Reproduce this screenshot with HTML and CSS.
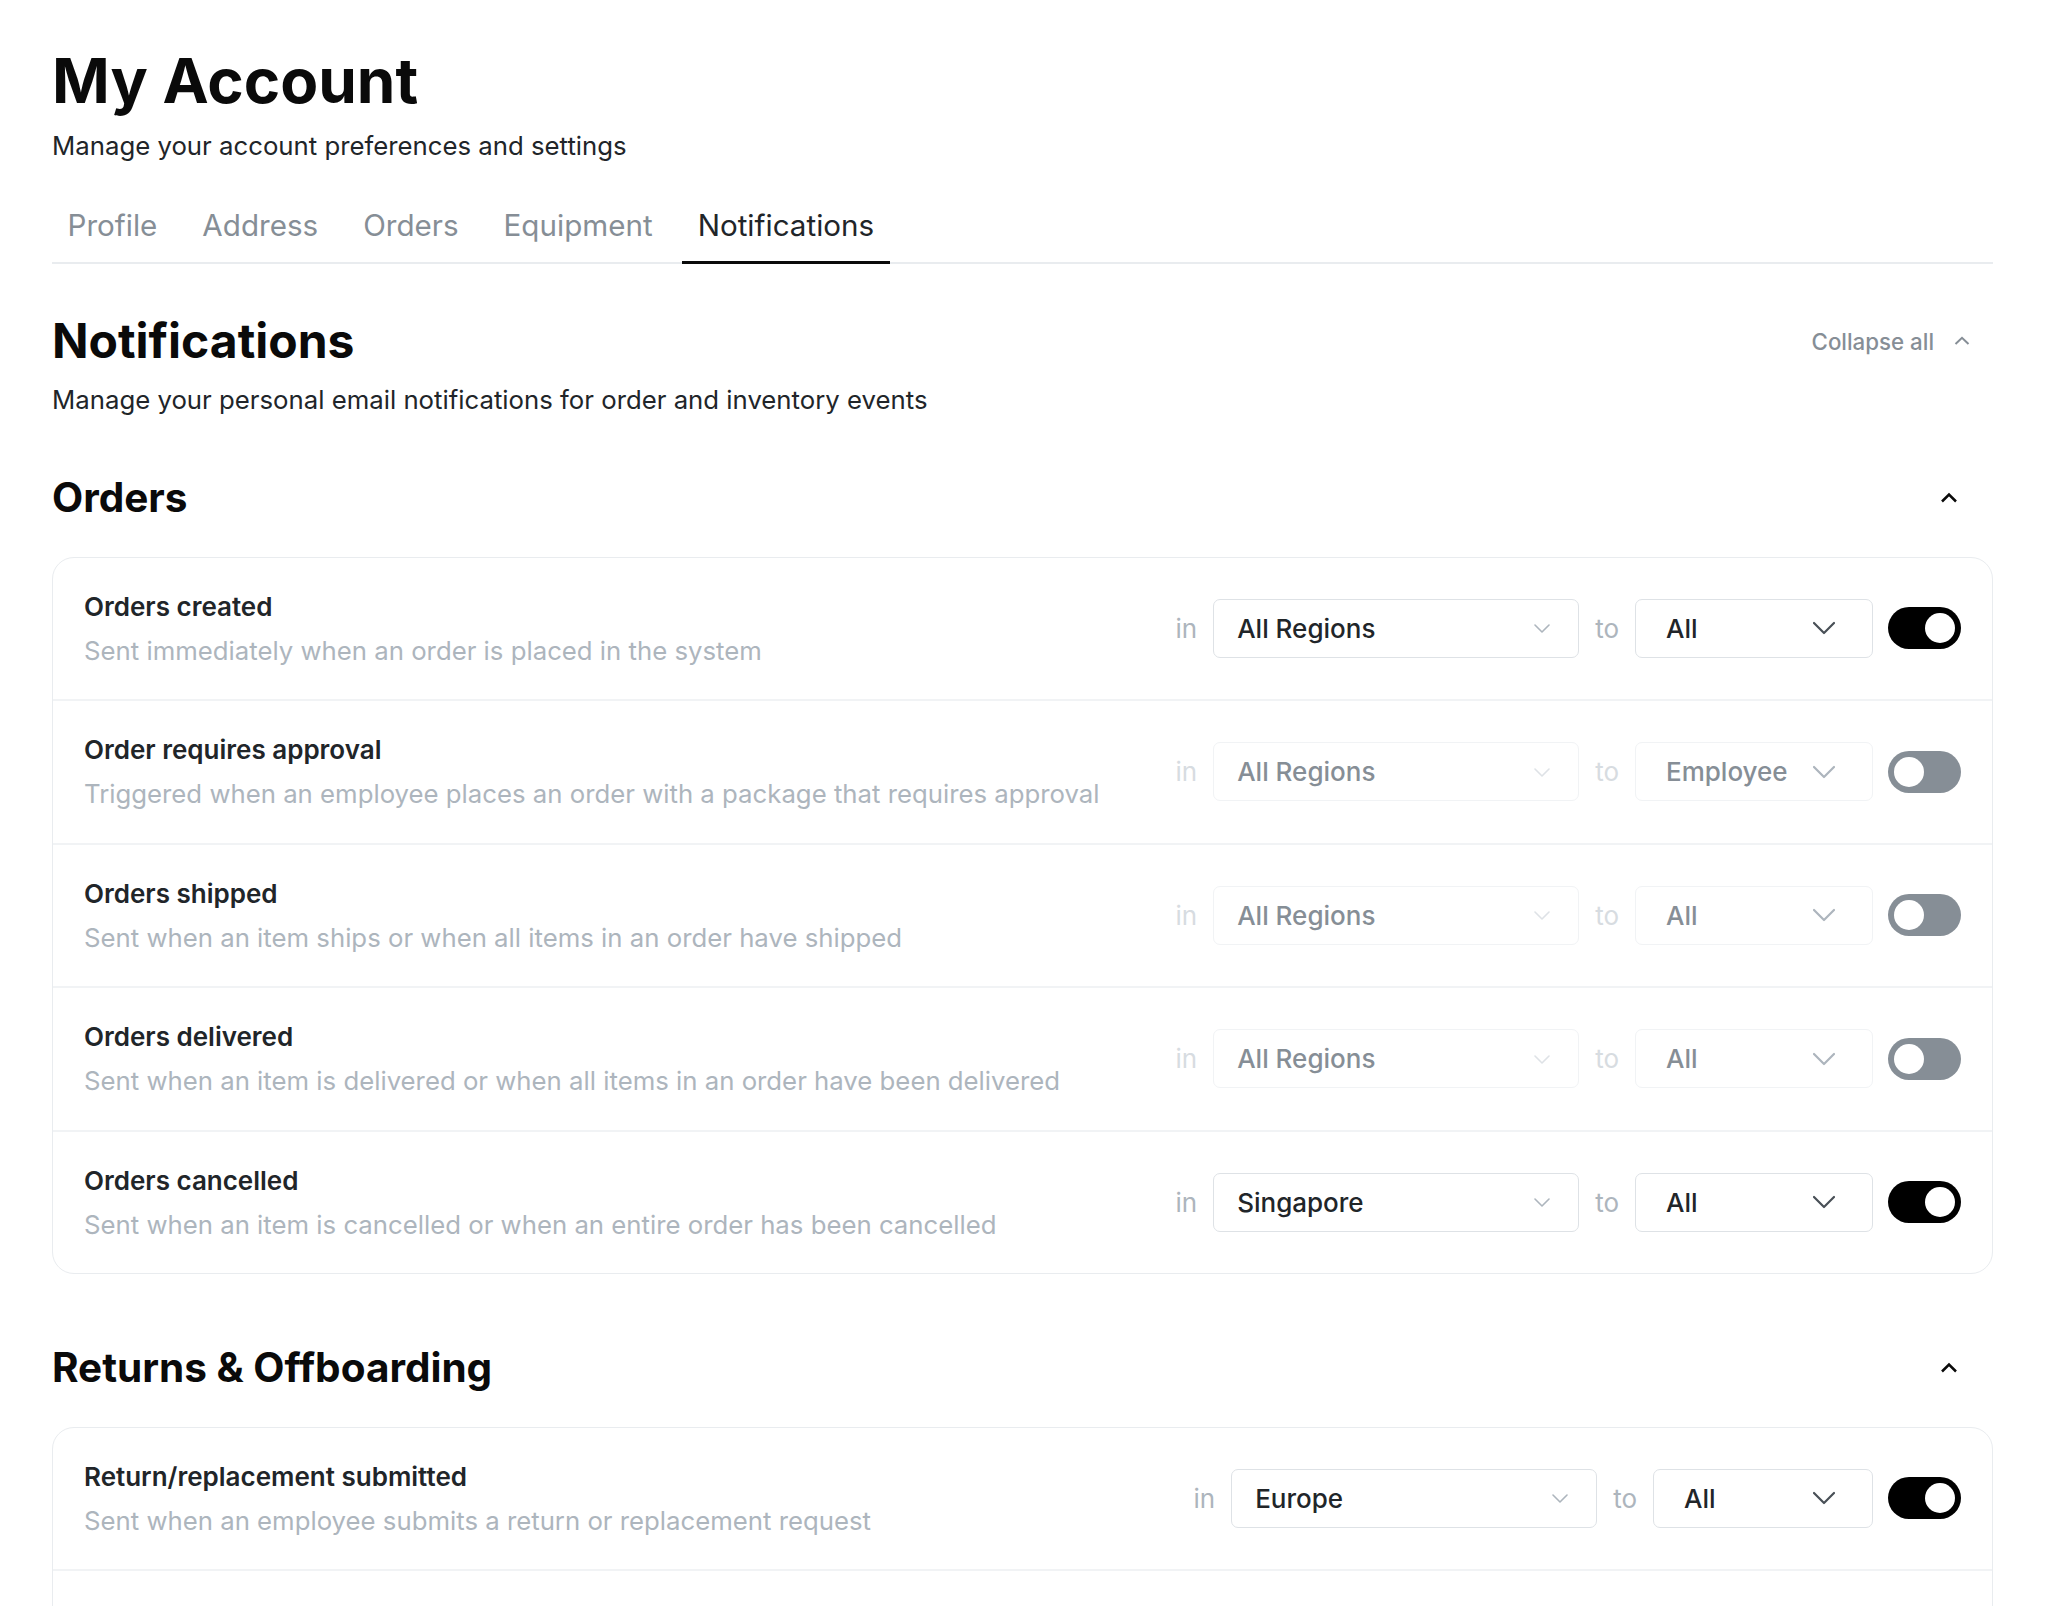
FILE: index.html
```html
<!DOCTYPE html>
<html lang="en">

<head>
	<meta charset="UTF-8">
	<meta name="viewport" content="width=device-width, initial-scale=1.0">
	<title>My Account - Notifications</title>
	<link rel="stylesheet" href="styles.css">
</head>

<body>

	<main class="page">
		<header class="page-header">
			<h1>My Account</h1>
			<p class="lead">Manage your account preferences and settings</p>
		</header>

		<nav class="tabs">
			<a class="tab" href="#">Profile</a>
			<a class="tab" href="#">Address</a>
			<a class="tab" href="#">Orders</a>
			<a class="tab" href="#">Equipment</a>
			<a class="tab active" href="#">Notifications</a>
		</nav>

		<section class="panel">
			<div class="panel-head">
				<h2>Notifications</h2>
				<button class="collapse-all">
					Collapse all
					<svg width="16" height="16" viewBox="0 0 16 16"><path d="M1.5 11 L8 4.8 L14.5 11" /></svg>
				</button>
			</div>
			<p class="lead">Manage your personal email notifications for order and inventory events</p>

			<!-- Orders -->
			<div class="group">
				<div class="group-head">
					<h3>Orders</h3>
					<button class="group-toggle">
						<svg width="18" height="18" viewBox="0 0 18 18"><path d="M2 12.5 L9 5.5 L16 12.5" /></svg>
					</button>
				</div>

				<div class="card">
					<div class="row">
						<div class="row-text">
							<div class="row-title">Orders created</div>
							<div class="row-desc">Sent immediately when an order is placed in the system</div>
						</div>
						<div class="row-controls">
							<span class="label">in</span>
							<div class="select select-region"><span>All Regions</span>
								<svg width="16" height="16" viewBox="0 0 16 16"><path d="M1 5 L8 12 L15 5" /></svg>
							</div>
							<span class="label">to</span>
							<div class="select select-audience"><span>All</span>
								<svg width="22" height="22" viewBox="0 0 22 22"><path d="M1 6 L11 16 L21 6" /></svg>
							</div>
							<div class="toggle on"></div>
						</div>
					</div>

					<div class="row off">
						<div class="row-text">
							<div class="row-title">Order requires approval</div>
							<div class="row-desc">Triggered when an employee places an order with a package that requires approval</div>
						</div>
						<div class="row-controls">
							<span class="label">in</span>
							<div class="select select-region"><span>All Regions</span>
								<svg width="16" height="16" viewBox="0 0 16 16"><path d="M1 5 L8 12 L15 5" /></svg>
							</div>
							<span class="label">to</span>
							<div class="select select-audience"><span>Employee</span>
								<svg width="22" height="22" viewBox="0 0 22 22"><path d="M1 6 L11 16 L21 6" /></svg>
							</div>
							<div class="toggle"></div>
						</div>
					</div>

					<div class="row off">
						<div class="row-text">
							<div class="row-title">Orders shipped</div>
							<div class="row-desc">Sent when an item ships or when all items in an order have shipped</div>
						</div>
						<div class="row-controls">
							<span class="label">in</span>
							<div class="select select-region"><span>All Regions</span>
								<svg width="16" height="16" viewBox="0 0 16 16"><path d="M1 5 L8 12 L15 5" /></svg>
							</div>
							<span class="label">to</span>
							<div class="select select-audience"><span>All</span>
								<svg width="22" height="22" viewBox="0 0 22 22"><path d="M1 6 L11 16 L21 6" /></svg>
							</div>
							<div class="toggle"></div>
						</div>
					</div>

					<div class="row off">
						<div class="row-text">
							<div class="row-title">Orders delivered</div>
							<div class="row-desc">Sent when an item is delivered or when all items in an order have been delivered</div>
						</div>
						<div class="row-controls">
							<span class="label">in</span>
							<div class="select select-region"><span>All Regions</span>
								<svg width="16" height="16" viewBox="0 0 16 16"><path d="M1 5 L8 12 L15 5" /></svg>
							</div>
							<span class="label">to</span>
							<div class="select select-audience"><span>All</span>
								<svg width="22" height="22" viewBox="0 0 22 22"><path d="M1 6 L11 16 L21 6" /></svg>
							</div>
							<div class="toggle"></div>
						</div>
					</div>

					<div class="row">
						<div class="row-text">
							<div class="row-title">Orders cancelled</div>
							<div class="row-desc">Sent when an item is cancelled or when an entire order has been cancelled</div>
						</div>
						<div class="row-controls">
							<span class="label">in</span>
							<div class="select select-region"><span>Singapore</span>
								<svg width="16" height="16" viewBox="0 0 16 16"><path d="M1 5 L8 12 L15 5" /></svg>
							</div>
							<span class="label">to</span>
							<div class="select select-audience"><span>All</span>
								<svg width="22" height="22" viewBox="0 0 22 22"><path d="M1 6 L11 16 L21 6" /></svg>
							</div>
							<div class="toggle on"></div>
						</div>
					</div>
				</div>
			</div>

			<!-- Returns & Offboarding -->
			<div class="group">
				<div class="group-head">
					<h3>Returns &amp; Offboarding</h3>
					<button class="group-toggle">
						<svg width="18" height="18" viewBox="0 0 18 18"><path d="M2 12.5 L9 5.5 L16 12.5" /></svg>
					</button>
				</div>

				<div class="card card-returns">
					<div class="row">
						<div class="row-text">
							<div class="row-title">Return/replacement submitted</div>
							<div class="row-desc">Sent when an employee submits a return or replacement request</div>
						</div>
						<div class="row-controls">
							<span class="label">in</span>
							<div class="select select-region"><span>Europe</span>
								<svg width="16" height="16" viewBox="0 0 16 16"><path d="M1 5 L8 12 L15 5" /></svg>
							</div>
							<span class="label">to</span>
							<div class="select select-audience"><span>All</span>
								<svg width="22" height="22" viewBox="0 0 22 22"><path d="M1 6 L11 16 L21 6" /></svg>
							</div>
							<div class="toggle on"></div>
						</div>
					</div>

					<div class="row">
						<div class="row-text">
							<div class="row-title">Offboarding started</div>
							<div class="row-desc">Sent when an employee is scheduled for offboarding</div>
						</div>
						<div class="row-controls">
							<span class="label">in</span>
							<div class="select select-region"><span>All Regions</span>
								<svg width="16" height="16" viewBox="0 0 16 16"><path d="M1 5 L8 12 L15 5" /></svg>
							</div>
							<span class="label">to</span>
							<div class="select select-audience"><span>Manager</span>
								<svg width="22" height="22" viewBox="0 0 22 22"><path d="M1 6 L11 16 L21 6" /></svg>
							</div>
							<div class="toggle on"></div>
						</div>
					</div>
				</div>
			</div>
		</section>
	</main>

</body>

</html>
```

FILE: styles.css
```css
* {
	box-sizing: border-box;
}

body {
	margin: 0;
	font-family: Inter, 'Noto Sans', sans-serif;
	background: #fff;
	color: #212529;
}

.page {
	padding: 45px 53px 80px 52px;
}

h1 {
	margin: 0;
	font-size: 62px;
	line-height: 72px;
	font-weight: 700;
	color: #0a0a0a;
}

.lead {
	margin: 9px 0 0;
	font-size: 25.75px;
	line-height: 39px;
	color: #212529;
}

/* Tabs */
.tabs {
	display: flex;
	gap: 14px;
	margin-top: 28px;
	border-bottom: 2px solid #e9ecef;
}

.tab {
	padding: 14px 15.5px 18px;
	margin-bottom: -2px;
	font-size: 29.6px;
	line-height: 36px;
	color: #868e96;
	text-decoration: none;
	border-bottom: 3px solid transparent;
}

.tab.active {
	color: #212529;
	border-bottom-color: #0a0a0a;
}

/* Notifications panel */
.panel {
	margin-top: 48px;
}

.panel-head {
	display: flex;
	align-items: center;
	justify-content: space-between;
}

h2 {
	margin: 0;
	font-size: 48px;
	line-height: 58px;
	font-weight: 700;
	color: #0a0a0a;
}

.panel .lead {
	margin-top: 10px;
}

button {
	font-family: inherit;
	background: none;
	border: none;
	padding: 0;
	cursor: pointer;
}

.collapse-all {
	display: flex;
	align-items: center;
	gap: 20px;
	margin-right: 23px;
	font-size: 22.3px;
	font-weight: 500;
	color: #868e96;
}

.collapse-all svg path {
	fill: none;
	stroke: #868e96;
	stroke-width: 2;
}

/* Groups */
.group {
	margin-top: 70px;
}

.panel .lead + .group {
	margin-top: 55px;
}

.group-head {
	display: flex;
	align-items: center;
	justify-content: space-between;
}

h3 {
	margin: 0;
	font-size: 40.5px;
	line-height: 47px;
	font-weight: 700;
	color: #0a0a0a;
}

.group-toggle {
	display: flex;
	padding: 7px;
	margin-right: 28px;
}

.group-toggle svg path {
	fill: none;
	stroke: #0a0a0a;
	stroke-width: 2.5;
}

.card {
	margin-top: 35.5px;
	border: 1.5px solid #e9ecef;
	border-radius: 22px;
	background: #fff;
}

.row {
	display: flex;
	align-items: center;
	justify-content: space-between;
	padding: 29.25px 31px;
	border-bottom: 2px solid #f1f3f5;
}

.row:last-child {
	border-bottom: none;
}

.row-title {
	font-size: 26px;
	line-height: 39.5px;
	font-weight: 600;
	color: #212529;
}

.row-desc {
	margin-top: 4.5px;
	font-size: 25.75px;
	line-height: 39px;
	color: #adb5bd;
}

.row-controls {
	display: flex;
	align-items: center;
	gap: 16px;
}

.label {
	font-size: 26px;
	color: #adb5bd;
}

/* Select boxes */
.select {
	display: flex;
	align-items: center;
	justify-content: space-between;
	height: 59px;
	border: 1.5px solid #dee2e6;
	border-radius: 7px;
	font-size: 26px;
	font-weight: 500;
	color: #212529;
}

.select svg path {
	fill: none;
	stroke-linecap: round;
	stroke-linejoin: round;
}

.select-region {
	width: 366px;
	padding: 0 28px 0 23px;
}

.select-region svg path {
	stroke: #adb5bd;
	stroke-width: 1.6;
}

.select-audience {
	width: 238px;
	padding: 0 37px 0 30px;
}

.card-returns .select-audience {
	width: 220px;
}

.select-audience svg path {
	stroke: #495057;
	stroke-width: 2.2;
}

/* Disabled rows */
.row.off .label {
	color: #d7dce1;
}

.row.off .select {
	border-color: #f1f3f5;
	color: #868e96;
}

.row.off .select-region svg path {
	stroke: #dee2e6;
}

.row.off .select-audience svg path {
	stroke: #adb5bd;
}

/* Toggle switch */
.toggle {
	position: relative;
	width: 73px;
	height: 42px;
	margin-left: -1px;
	border-radius: 21px;
	background: #868e96;
}

.toggle::after {
	content: '';
	position: absolute;
	top: 6px;
	left: 6px;
	width: 30px;
	height: 30px;
	border-radius: 50%;
	background: #fff;
}

.toggle.on {
	background: #000;
}

.toggle.on::after {
	left: 37px;
}
```
